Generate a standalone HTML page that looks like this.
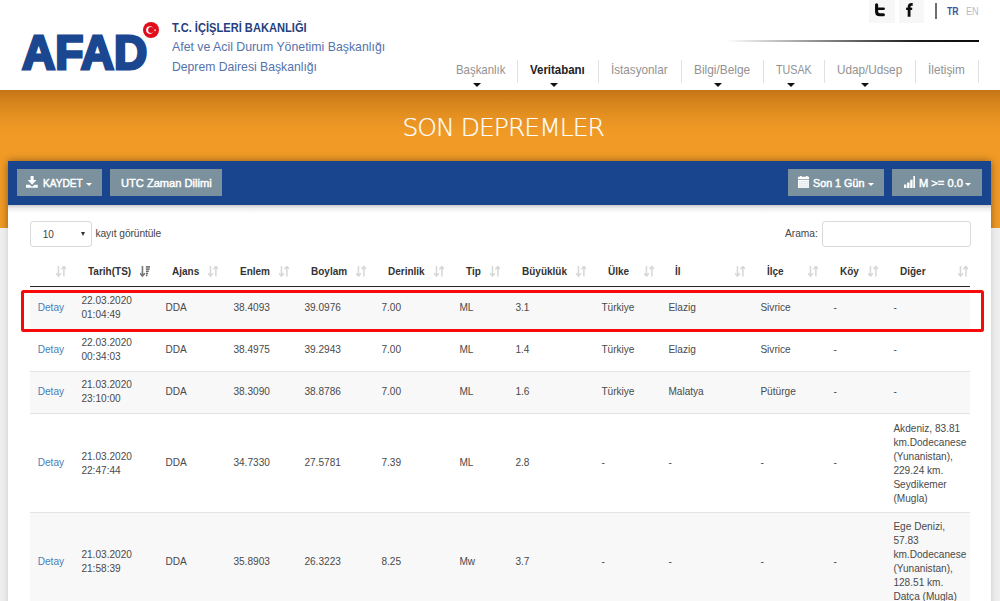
<!DOCTYPE html>
<html lang="tr">
<head>
<meta charset="utf-8">
<title>Son Depremler</title>
<style>
*{box-sizing:border-box;}
html,body{margin:0;padding:0;}
body{width:1000px;height:601px;overflow:hidden;background:#f0f0f0;font-family:"Liberation Sans",sans-serif;position:relative;}
.sx{display:inline-block;transform-origin:0 50%;white-space:nowrap;}
/* ---------- header ---------- */
#hdr{position:absolute;left:0;top:0;width:1000px;height:90px;background:#fff;}
#logo{position:absolute;left:21.8px;top:22.1px;font:bold 48.6px/60px "Liberation Sans",sans-serif;color:#1b4690;letter-spacing:0;-webkit-text-stroke:2.9px #1b4690;transform:scaleX(.947);transform-origin:0 50%;}
#flag{position:absolute;left:143.3px;top:22.4px;width:16px;height:16px;}
.org{position:absolute;left:172.4px;white-space:nowrap;font-family:"Liberation Sans",sans-serif;font-size:12.4px;line-height:16px;}
#org1{top:20px;font-weight:bold;color:#26407f;}
#org2{top:39px;color:#5573ac;}
#org3{top:58.5px;color:#5573ac;}
.soc{position:absolute;top:0;width:26px;height:22.5px;background:#f7f7f7;}
.soc svg{position:absolute;}
#lang-sep{position:absolute;left:935px;top:3px;width:2px;height:16px;background:#6e6e6e;}
#tr{position:absolute;left:946.5px;top:4px;font:bold 10.5px/14px "Liberation Sans",sans-serif;color:#3a589b;}
#en{position:absolute;left:965.5px;top:4px;font:10.5px/14px "Liberation Sans",sans-serif;color:#b3bccf;}
#topline{position:absolute;left:726px;top:40.3px;width:253px;height:1.7px;background:linear-gradient(to right,rgba(10,10,10,0),rgba(10,10,10,.5) 40%,rgba(10,10,10,.92) 75%,#0a0a0a);}
.nav{position:absolute;top:62px;font:12.4px/16px "Liberation Sans",sans-serif;color:#929292;white-space:nowrap;}
.nav.act{font-weight:bold;color:#222;}
.nsep{position:absolute;top:60px;width:1px;height:23px;background:#e1e1e1;}
.narr{position:absolute;top:82.6px;width:0;height:0;border-left:4px solid transparent;border-right:4px solid transparent;border-top:4px solid #111;}
/* ---------- orange band ---------- */
#band{position:absolute;left:0;top:90px;width:1000px;height:138px;background:#f19b26;}
#band:before{content:"";position:absolute;left:0;top:0;width:100%;height:44px;background:linear-gradient(to bottom,rgba(140,70,0,.45),rgba(140,70,0,.27) 28%,rgba(140,70,0,.11) 62%,rgba(140,70,0,0));}
#title{position:absolute;left:402.4px;top:111.9px;-webkit-text-stroke:.22px #fff;white-space:nowrap;font:25px/32px "DejaVu Sans Light","DejaVu Sans","Liberation Sans",sans-serif;font-weight:200;color:#fff;letter-spacing:-.97px;}
/* ---------- panel ---------- */
#panel{position:absolute;left:8px;top:161px;width:983px;height:460px;background:#fff;box-shadow:0 0 8px rgba(0,0,0,.42);}
#phead{position:absolute;left:0;top:0;width:983px;height:43.7px;background:#18458e;}
#pshade{position:absolute;left:0;top:43.7px;width:983px;height:8px;background:linear-gradient(to bottom,rgba(0,0,0,.2),rgba(0,0,0,.07) 40%,rgba(0,0,0,0));}
.btn{position:absolute;top:8px;height:27px;background:#7b919d;color:#fff;font:10.7px/27px "Liberation Sans",sans-serif;-webkit-text-stroke:.45px #fff;white-space:nowrap;}
.btn .sx{position:absolute;top:1.2px;}
.btn svg{position:absolute;}
.caret{position:absolute;top:13.9px;width:0;height:0;margin-left:-.3px;border-left:3.3px solid transparent;border-right:3.3px solid transparent;border-top:3.6px solid #fff;}
/* ---------- controls ---------- */
#sel{position:absolute;left:21.5px;top:60.2px;width:62.8px;height:25.6px;border:1px solid #dadada;border-radius:3px;background:#fff;font:10px/25px "Liberation Sans",sans-serif;color:#444;padding-left:12.3px;}
#sel i{position:absolute;left:50.6px;top:9.4px;width:0;height:0;border-left:2.5px solid transparent;border-right:2.5px solid transparent;border-top:4.8px solid #333;}
#lenlab{position:absolute;left:87.5px;top:66px;font:10.2px/14px "Liberation Sans",sans-serif;color:#444;letter-spacing:-.08px;}
#arama{position:absolute;left:777px;top:66px;font:10.2px/14px "Liberation Sans",sans-serif;color:#444;}
#srch{position:absolute;left:814px;top:60.2px;width:149px;height:25.5px;border:1px solid #dadada;border-radius:3px;background:#fff;}
/* ---------- table ---------- */
table{position:absolute;left:22px;top:95px;width:940px;border-collapse:separate;border-spacing:0;table-layout:fixed;font:10.1px/14px "Liberation Sans",sans-serif;color:#4a4a4a;}
th{position:relative;height:31px;padding:2px 0 0 15px;text-align:left;font-weight:bold;font-size:10px;color:#333;border-bottom:1px solid #262626;white-space:nowrap;vertical-align:middle;}
td{padding:5.9px 4px 7.1px 8.4px;vertical-align:middle;border-top:1px solid #e4e4e4;}
td:nth-child(2),td:last-child{padding-top:6.3px;padding-bottom:6.7px;}
td:first-child{padding-left:7.7px;}
tbody tr:first-child td{border-top:0;padding-top:6.9px;}
tbody tr:first-child td:nth-child(2){padding-top:7.3px;}
th:nth-child(9) .si{right:6px;}
tr.t4 td,tr.t5 td{padding-top:6.9px;padding-bottom:6.1px;}
tr.t4 td:nth-child(2){padding-top:7.3px;padding-bottom:5.7px;}
tr.t5 td:nth-child(2){padding-top:6.8px;padding-bottom:6.2px;}
tr.t5 td:last-child{padding-top:6.3px;padding-bottom:6.7px;}
tr.o td{background:#f8f8f8;}
.d{display:block;}
td a{color:#4a7fb8;text-decoration:none;}
th:last-child .si{right:1.6px;}
.si{position:absolute;right:7px;top:10.3px;width:10.4px;height:10.4px;}
.strip{position:absolute;top:228px;height:380px;}
#sl{left:0;width:8px;background:linear-gradient(to left,#dbdbdb,#e6e6e6 28%,#ececec 62%,#efefef);}
#sr{left:991px;width:9px;background:linear-gradient(to right,#dbdbdb,#e6e6e6 28%,#ececec 62%,#efefef);}
#redbox{position:absolute;left:21px;top:290px;width:962.5px;height:42px;border:3px solid #f80a0a;border-radius:2.5px;}
</style>
</head>
<body>
<div id="hdr">
  <div id="logo">AFAD</div>
  <svg id="flag" viewBox="0 0 16 16"><circle cx="8" cy="8" r="8" fill="#e20d1a"/><circle cx="6.9" cy="8.1" r="3.8" fill="#fff"/><circle cx="8.1" cy="8.1" r="3.0" fill="#e20d1a"/><path d="M12.05 6.8l.36.86.93.08-.71.61.22.91-.8-.49-.8.49.22-.91-.71-.61.93-.08z" fill="#fff"/></svg>
  <div class="org" id="org1"><span class="sx" style="transform:scaleX(.897)">T.C. İÇİŞLERİ BAKANLIĞI</span></div>
  <div class="org" id="org2"><span class="sx" style="transform:scaleX(.993)">Afet ve Acil Durum Yönetimi Başkanlığı</span></div>
  <div class="org" id="org3"><span class="sx" style="transform:scaleX(.984)">Deprem Dairesi Başkanlığı</span></div>

  <div class="soc" style="left:868.7px"><svg style="left:0;top:0" width="26" height="22" viewBox="0 0 26 22"><path d="M7.6 4.8v6.6q0 3.3 3.3 3.3h3.5" fill="none" stroke="#0c0c0c" stroke-width="3.1" stroke-linecap="round" stroke-linejoin="round"/><path d="M7.6 8.8h7.1" fill="none" stroke="#0c0c0c" stroke-width="2.4" stroke-linecap="round"/></svg></div>
  <div class="soc" style="left:898.8px;width:25.4px"><svg style="left:0;top:0" width="26" height="22" viewBox="0 0 26 22"><path d="M13.7 4.4h-1.1q-2.5 0-2.5 2.5v9.9" fill="none" stroke="#0c0c0c" stroke-width="2.8"/><path d="M7.1 8.8h6.1" fill="none" stroke="#0c0c0c" stroke-width="2.3"/></svg></div>
  <div id="lang-sep"></div>
  <div id="tr"><span class="sx" style="transform:scaleX(.83)">TR</span></div><div id="en"><span class="sx" style="transform:scaleX(.87)">EN</span></div>
  <div id="topline"></div>

  <div class="nav" style="left:455.5px"><span class="sx" style="transform:scaleX(.92)">Başkanlık</span></div>
  <div class="nav act" style="left:530px"><span class="sx" style="transform:scaleX(.925)">Veritabanı</span></div>
  <div class="nav" style="left:611px"><span class="sx" style="transform:scaleX(.944)">İstasyonlar</span></div>
  <div class="nav" style="left:693.5px"><span class="sx" style="transform:scaleX(.96)">Bilgi/Belge</span></div>
  <div class="nav" style="left:775.5px"><span class="sx" style="transform:scaleX(.866)">TUSAK</span></div>
  <div class="nav" style="left:836.5px"><span class="sx" style="transform:scaleX(.946)">Udap/Udsep</span></div>
  <div class="nav" style="left:928px"><span class="sx" style="transform:scaleX(.954)">İletişim</span></div>
  <div class="nsep" style="left:517px"></div>
  <div class="nsep" style="left:598px"></div>
  <div class="nsep" style="left:681px"></div>
  <div class="nsep" style="left:763px"></div>
  <div class="nsep" style="left:824px"></div>
  <div class="nsep" style="left:915px"></div>
  <div class="nsep" style="left:978px"></div>
  <div class="narr" style="left:472.5px"></div>
  <div class="narr" style="left:549.5px"></div>
  <div class="narr" style="left:714px"></div>
  <div class="narr" style="left:787px"></div>
  <div class="narr" style="left:860.5px"></div>
</div>

<div id="band"></div>
<div id="title">SON DEPREMLER</div>

<div id="panel">
  <div id="phead">
    <div class="btn" style="left:9px;width:85px">
      <svg style="left:8.9px;top:7px" width="11.8" height="11.8" viewBox="0 0 11.8 11.8"><path d="M4.6 0h3v4h2.9L6.1 8.7 1.7 4h2.9z" fill="#fff"/><path d="M0 8.7h3.6l2.5 2 2.5-2h3.2v3.1H0z" fill="#fff"/></svg>
      <span class="sx" style="left:25.8px;transform:scaleX(.948)">KAYDET</span><i class="caret" style="left:69px"></i></div>
    <div class="btn" style="left:102px;width:112px"><span class="sx" style="left:11px;transform:scaleX(1.038)">UTC Zaman Dilimi</span></div>
    <div class="btn" style="left:780px;width:96px">
      <svg style="left:9.8px;top:7.1px" width="11.6" height="11.9" viewBox="0 0 11.6 11.9"><path d="M0 .7h2V0h1.6v.7h4.4V0h1.6v.7h2V3H0z" fill="#fff"/><path d="M0 3.7h11.6v8.2H0z" fill="#fff"/><g fill="#7b919d" opacity=".55"><rect x="1.4" y="5.3" width="1" height="1"/><rect x="3.4" y="5.3" width="1" height="1"/><rect x="5.4" y="5.3" width="1" height="1"/><rect x="7.4" y="5.3" width="1" height="1"/><rect x="9.4" y="5.3" width="1" height="1"/><rect x="1.4" y="7.4" width="1" height="1"/><rect x="3.4" y="7.4" width="1" height="1"/><rect x="5.4" y="7.4" width="1" height="1"/><rect x="7.4" y="7.4" width="1" height="1"/><rect x="9.4" y="7.4" width="1" height="1"/><rect x="1.4" y="9.5" width="1" height="1"/><rect x="3.4" y="9.5" width="1" height="1"/><rect x="5.4" y="9.5" width="1" height="1"/><rect x="7.4" y="9.5" width="1" height="1"/><rect x="9.4" y="9.5" width="1" height="1"/></g></svg>
      <span class="sx" style="left:24.5px;transform:scaleX(1.005)">Son 1 Gün</span><i class="caret" style="left:80.4px"></i></div>
    <div class="btn" style="left:884px;width:90px">
      <svg style="left:11.6px;top:7.1px" width="11.8" height="11.9" viewBox="0 0 11.8 11.9"><path d="M0 8.6h2.4v3.3H0zM3.1 6.5h2.4v5.4H3.1zM6.2 3.8h2.4v8.1H6.2zM9.3 0h2.5v11.9H9.3z" fill="#fff"/></svg>
      <span class="sx" style="left:26.5px;transform:scaleX(1.042)">M &gt;= 0.0</span><i class="caret" style="left:73.5px"></i></div>
  </div>
  <div id="pshade"></div>
  <div id="sel">10<i></i></div>
  <div id="lenlab">kayıt görüntüle</div>
  <div id="arama">Arama:</div>
  <div id="srch"></div>
  <table>
    <colgroup><col style="width:43px"><col style="width:84px"><col style="width:68px"><col style="width:71px"><col style="width:77px"><col style="width:78px"><col style="width:56px"><col style="width:86px"><col style="width:67px"><col style="width:92px"><col style="width:73px"><col style="width:60px"><col style="width:85px"></colgroup>
    <thead><tr>
      <th><svg class="si" viewBox="0 0 10.4 10.4"><g fill="none" stroke="#d7d7d7" stroke-width="1.5"><path d="M2.45 0V9.6M0 7.2l2.45 2.9 2.45-2.9"/><path d="M7.9 10.4V.8M5.45 3.2L7.9 .3l2.45 2.9"/></g></svg></th><th>Tarih(TS)<svg class="si" viewBox="0 0 10.4 10.4"><g fill="none" stroke="#777" stroke-width="1.6"><path d="M2.45 0V9.6M0 7.2l2.45 2.9 2.45-2.9"/></g><g fill="#6c6c6c"><rect x="5.9" y=".1" width="4.5" height="1.6"/><rect x="5.9" y="2.3" width="3.7" height="1.6"/><rect x="5.9" y="4.5" width="2.9" height="1.6"/><rect x="5.9" y="6.7" width="2.1" height="1.6"/><rect x="5.9" y="8.7" width="1.5" height="1.6"/></g></svg></th><th>Ajans<svg class="si" viewBox="0 0 10.4 10.4"><g fill="none" stroke="#d7d7d7" stroke-width="1.5"><path d="M2.45 0V9.6M0 7.2l2.45 2.9 2.45-2.9"/><path d="M7.9 10.4V.8M5.45 3.2L7.9 .3l2.45 2.9"/></g></svg></th><th>Enlem<svg class="si" viewBox="0 0 10.4 10.4"><g fill="none" stroke="#d7d7d7" stroke-width="1.5"><path d="M2.45 0V9.6M0 7.2l2.45 2.9 2.45-2.9"/><path d="M7.9 10.4V.8M5.45 3.2L7.9 .3l2.45 2.9"/></g></svg></th><th>Boylam<svg class="si" viewBox="0 0 10.4 10.4"><g fill="none" stroke="#d7d7d7" stroke-width="1.5"><path d="M2.45 0V9.6M0 7.2l2.45 2.9 2.45-2.9"/><path d="M7.9 10.4V.8M5.45 3.2L7.9 .3l2.45 2.9"/></g></svg></th><th>Derinlik<svg class="si" viewBox="0 0 10.4 10.4"><g fill="none" stroke="#d7d7d7" stroke-width="1.5"><path d="M2.45 0V9.6M0 7.2l2.45 2.9 2.45-2.9"/><path d="M7.9 10.4V.8M5.45 3.2L7.9 .3l2.45 2.9"/></g></svg></th><th>Tip<svg class="si" viewBox="0 0 10.4 10.4"><g fill="none" stroke="#d7d7d7" stroke-width="1.5"><path d="M2.45 0V9.6M0 7.2l2.45 2.9 2.45-2.9"/><path d="M7.9 10.4V.8M5.45 3.2L7.9 .3l2.45 2.9"/></g></svg></th><th>Büyüklük<svg class="si" viewBox="0 0 10.4 10.4"><g fill="none" stroke="#d7d7d7" stroke-width="1.5"><path d="M2.45 0V9.6M0 7.2l2.45 2.9 2.45-2.9"/><path d="M7.9 10.4V.8M5.45 3.2L7.9 .3l2.45 2.9"/></g></svg></th><th>Ülke<svg class="si" viewBox="0 0 10.4 10.4"><g fill="none" stroke="#d7d7d7" stroke-width="1.5"><path d="M2.45 0V9.6M0 7.2l2.45 2.9 2.45-2.9"/><path d="M7.9 10.4V.8M5.45 3.2L7.9 .3l2.45 2.9"/></g></svg></th><th>İl<svg class="si" viewBox="0 0 10.4 10.4"><g fill="none" stroke="#d7d7d7" stroke-width="1.5"><path d="M2.45 0V9.6M0 7.2l2.45 2.9 2.45-2.9"/><path d="M7.9 10.4V.8M5.45 3.2L7.9 .3l2.45 2.9"/></g></svg></th><th>İlçe<svg class="si" viewBox="0 0 10.4 10.4"><g fill="none" stroke="#d7d7d7" stroke-width="1.5"><path d="M2.45 0V9.6M0 7.2l2.45 2.9 2.45-2.9"/><path d="M7.9 10.4V.8M5.45 3.2L7.9 .3l2.45 2.9"/></g></svg></th><th>Köy<svg class="si" viewBox="0 0 10.4 10.4"><g fill="none" stroke="#d7d7d7" stroke-width="1.5"><path d="M2.45 0V9.6M0 7.2l2.45 2.9 2.45-2.9"/><path d="M7.9 10.4V.8M5.45 3.2L7.9 .3l2.45 2.9"/></g></svg></th><th>Diğer<svg class="si" viewBox="0 0 10.4 10.4"><g fill="none" stroke="#d7d7d7" stroke-width="1.5"><path d="M2.45 0V9.6M0 7.2l2.45 2.9 2.45-2.9"/><path d="M7.9 10.4V.8M5.45 3.2L7.9 .3l2.45 2.9"/></g></svg></th>
    </tr></thead>
    <tbody>
      <tr class="o" style="height:42px"><td><a>Detay</a></td><td><span class="d">22.03.2020 01:04:49</span></td><td>DDA</td><td>38.4093</td><td>39.0976</td><td>7.00</td><td>ML</td><td>3.1</td><td>Türkiye</td><td>Elazig</td><td>Sivrice</td><td>-</td><td>-</td></tr>
      <tr style="height:42px"><td><a>Detay</a></td><td><span class="d">22.03.2020 00:34:03</span></td><td>DDA</td><td>38.4975</td><td>39.2943</td><td>7.00</td><td>ML</td><td>1.4</td><td>Türkiye</td><td>Elazig</td><td>Sivrice</td><td>-</td><td>-</td></tr>
      <tr class="o" style="height:42px"><td><a>Detay</a></td><td><span class="d">21.03.2020 23:10:00</span></td><td>DDA</td><td>38.3090</td><td>38.8786</td><td>7.00</td><td>ML</td><td>1.6</td><td>Türkiye</td><td>Malatya</td><td>Pütürge</td><td>-</td><td>-</td></tr>
      <tr class="t4" style="height:99px"><td><a>Detay</a></td><td><span class="d">21.03.2020 22:47:44</span></td><td>DDA</td><td>34.7330</td><td>27.5781</td><td>7.39</td><td>ML</td><td>2.8</td><td>-</td><td>-</td><td>-</td><td>-</td><td style="padding-top:7.3px;padding-bottom:5.7px">Akdeniz, 83.81 km.Dodecanese (Yunanistan), 229.24 km. Seydikemer (Mugla)</td></tr>
      <tr class="o t5" style="height:99px"><td><a>Detay</a></td><td><span class="d">21.03.2020 21:58:39</span></td><td>DDA</td><td>35.8903</td><td>26.3223</td><td>8.25</td><td>Mw</td><td>3.7</td><td>-</td><td>-</td><td>-</td><td>-</td><td>Ege Denizi, 57.83 km.Dodecanese (Yunanistan), 128.51 km. Datça (Mugla)</td></tr>
    </tbody>
  </table>
</div>
<div class="strip" id="sl"></div><div class="strip" id="sr"></div>
<div id="redbox"></div>
</body>
</html>
